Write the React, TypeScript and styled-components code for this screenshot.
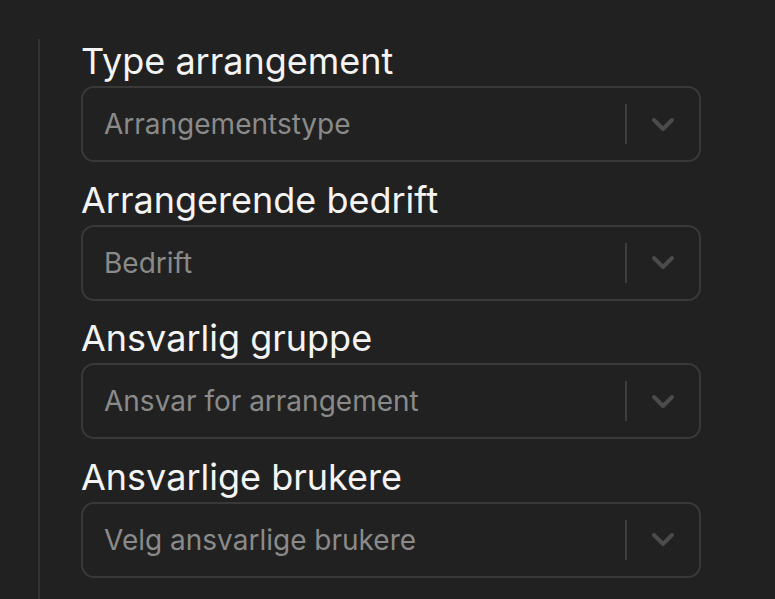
import * as React from 'react'
import styled, { createGlobalStyle } from 'styled-components'

const GlobalStyle = createGlobalStyle`
    html, body {
        margin: 0;
        padding: 0;
        background: #212121;
    }
    body {
        font-family: Inter, "Noto Sans", sans-serif;
    }
`

const Page = styled.div`
    height: 599px;
    overflow: hidden;
    padding: 39px 0 0 38px;
    box-sizing: border-box;
`

const Panel = styled.div`
    height: 100%;
    border-left: 2px solid #333333;
    padding-left: 41px;
    display: flex;
    flex-direction: column;
`

const Field = styled.div`
    width: 620px;
    display: flex;
    flex-direction: column;
    gap: 3px;
    margin-bottom: 15.5px;
`

const Label = styled.label`
    color: #f4f4f4;
    font-size: 36px;
    line-height: 43px;
    padding-top: 1px;
`

const Select = styled.div`
    box-sizing: border-box;
    height: 76px;
    border: 2px solid #393939;
    border-radius: 13px;
    display: flex;
    align-items: center;
    padding-left: 21px;
`

const Placeholder = styled.span`
    flex: 1;
    color: #8a8a8a;
    font-size: 28px;
`

const Separator = styled.span`
    width: 2px;
    height: 40px;
    background: #3d3d3d;
`

const Indicator = styled.span`
    width: 72px;
    display: flex;
    justify-content: center;
    align-items: center;
    color: #4b4b4b;
`

const Chevron = () => (
    <svg width="24" height="15" viewBox="0 0 24 15" fill="none">
        <path
            d="M3 3l9 9 9-9"
            stroke="currentColor"
            strokeWidth="4"
            strokeLinecap="round"
            strokeLinejoin="round"
        />
    </svg>
)

const fields = [
    { label: 'Type arrangement', placeholder: 'Arrangementstype' },
    { label: 'Arrangerende bedrift', placeholder: 'Bedrift' },
    { label: 'Ansvarlig gruppe', placeholder: 'Ansvar for arrangement' },
    { label: 'Ansvarlige brukere', placeholder: 'Velg ansvarlige brukere' },
]

const App: React.FC = () => (
    <>
        <GlobalStyle />
        <Page>
            <Panel>
                {fields.map((f) => (
                    <Field key={f.label}>
                        <Label>{f.label}</Label>
                        <Select>
                            <Placeholder>{f.placeholder}</Placeholder>
                            <Separator />
                            <Indicator>
                                <Chevron />
                            </Indicator>
                        </Select>
                    </Field>
                ))}
            </Panel>
        </Page>
    </>
)

export default App
